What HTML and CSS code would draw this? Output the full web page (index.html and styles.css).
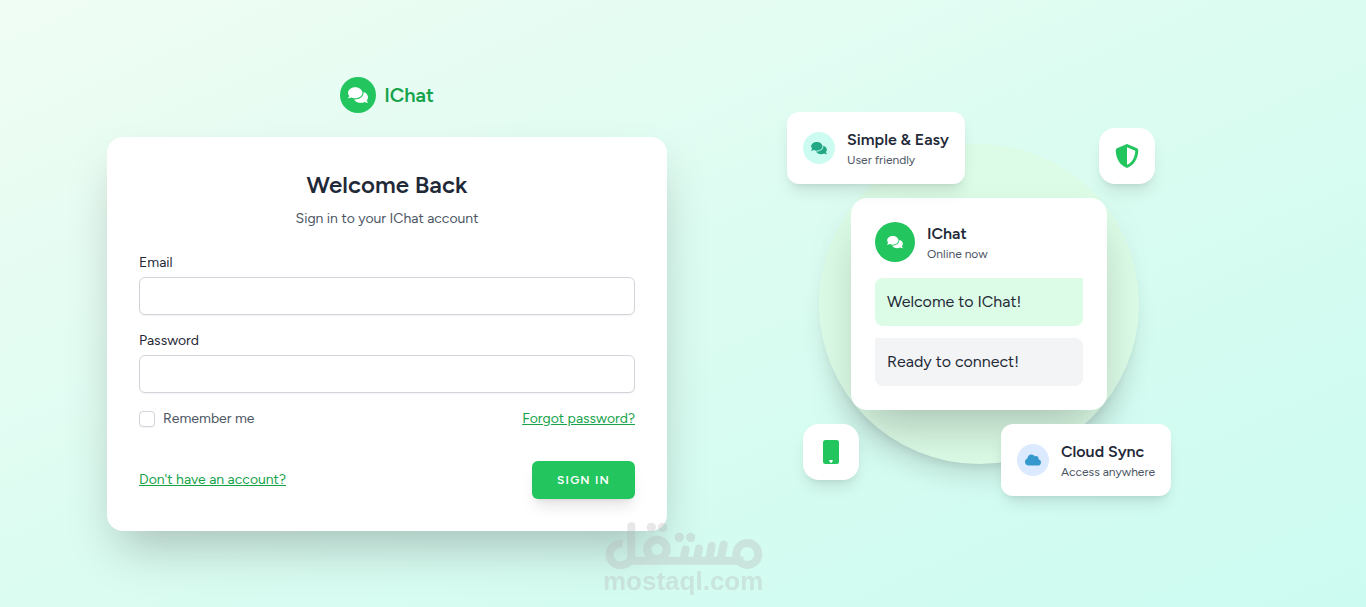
FILE: index.html
```html
<!DOCTYPE html>
<html lang="en">

<head>
    <meta charset="UTF-8">
    <meta name="viewport" content="width=device-width, initial-scale=1.0">
    <title>IChat - Sign in</title>
    <link rel="stylesheet" href="styles.css">
</head>

<body>
    <!-- Shared icons -->
    <svg class="sprite" aria-hidden="true">
        <symbol id="comments" viewBox="0 0 576 512">
            <path d="M416 192c0-88.4-93.1-160-208-160S0 103.6 0 192c0 34.3 14.1 65.9 38 92-13.4 30.2-35.5 54.2-35.8 54.5-2.2 2.3-2.8 5.7-1.5 8.7S4.8 352 8 352c36.6 0 66.9-12.3 88.7-25 32.2 15.7 70.3 25 111.3 25 114.9 0 208-71.6 208-160zm122 220c23.9-26 38-57.7 38-92 0-66.9-53.5-124.2-129.3-148.1.9 6.6 1.3 13.3 1.3 20.1 0 105.9-107.7 192-240 192-10.8 0-21.3-.8-31.7-1.9C207.8 439.6 281.8 480 368 480c41 0 79.1-9.2 111.3-25 21.8 12.7 52.1 25 88.7 25 3.2 0 6.1-1.9 7.3-4.8 1.3-2.9.7-6.3-1.5-8.7-.3-.3-22.4-24.2-35.8-54.5z" />
        </symbol>
    </svg>

    <div class="page">
        <div class="container">
            <main class="login">
                <a class="brand" href="#">
                    <span class="brand-icon"><svg><use href="#comments" /></svg></span>
                    <span>IChat</span>
                </a>

                <div class="card">
                    <h1>Welcome Back</h1>
                    <p class="subtitle">Sign in to your IChat account</p>

                    <form>
                        <div class="field">
                            <label for="email">Email</label>
                            <input type="email" id="email" name="email">
                        </div>
                        <div class="field">
                            <label for="password">Password</label>
                            <input type="password" id="password" name="password">
                        </div>
                        <div class="options">
                            <label class="remember" for="remember">
                                <input type="checkbox" id="remember" name="remember">
                                <span>Remember me</span>
                            </label>
                            <a class="link" href="#">Forgot password?</a>
                        </div>
                        <div class="actions">
                            <a class="link" href="#">Don't have an account?</a>
                            <button type="submit">Sign in</button>
                        </div>
                    </form>
                </div>
            </main>

            <section class="preview">
                <div class="circle">
                    <div class="chat">
                        <div class="chat-head">
                            <span class="avatar"><svg><use href="#comments" /></svg></span>
                            <div>
                                <h2>IChat</h2>
                                <p class="small">Online now</p>
                            </div>
                        </div>
                        <div class="bubble bubble-green">Welcome to IChat!</div>
                        <div class="bubble bubble-gray">Ready to connect!</div>
                    </div>

                    <div class="feature feature-simple">
                        <span class="dot dot-teal"><svg><use href="#comments" /></svg></span>
                        <div>
                            <h2>Simple &amp; Easy</h2>
                            <p class="small">User friendly</p>
                        </div>
                    </div>

                    <div class="feature feature-cloud">
                        <span class="dot dot-blue">
                            <svg viewBox="0 0 640 512">
                                <path d="M537.6 226.6c4.1-10.7 6.4-22.4 6.4-34.6 0-53-43-96-96-96-19.7 0-38.1 6-53.3 16.2C367 64.2 315.3 32 256 32c-88.4 0-160 71.6-160 160 0 2.7.1 5.4.2 8.1C40.2 219.8 0 273.2 0 336c0 79.5 64.5 144 144 144h368c70.7 0 128-57.3 128-128 0-61.9-44-113.6-102.4-125.4z" />
                            </svg>
                        </span>
                        <div>
                            <h2>Cloud Sync</h2>
                            <p class="small">Access anywhere</p>
                        </div>
                    </div>

                    <div class="tile tile-shield">
                        <svg viewBox="0 0 512 512">
                            <path d="M256 0c4.6 0 9.2 1 13.4 2.9L457.7 82.8c22 9.3 38.4 31 38.3 57.2-.5 99.2-41.3 280.7-213.6 363.2-16.7 8-36.1 8-52.8 0C57.3 420.7 16.5 239.2 16 140c-.1-26.2 16.3-47.9 38.300-57.2L242.7 2.9C246.8 1 251.4 0 256 0zm0 66.8v378.1C394 378 431.1 230.1 432 141.4L256 66.8z" />
                        </svg>
                    </div>
                    <div class="tile tile-phone">
                        <svg viewBox="0 0 24 24">
                            <path fill-rule="evenodd" d="M6.500 0h11a2.500 2.500 0 0 1 2.500 2.500v19a2.500 2.500 0 0 1-2.500 2.500h-11a2.500 2.500 0 0 1-2.500-2.500v-19a2.500 2.500 0 0 1 2.500-2.500zM10.300 20v1l1 1.800h1.400l1-1.800v-1z" />
                        </svg>
                    </div>
                </div>
            </section>
        </div>
    </div>

    <div class="watermark">
        <svg viewBox="38 34 480 142" role="img" aria-label="مستقل">
            <g fill="none" stroke="currentColor" stroke-width="24" stroke-linecap="round">
                <path d="M97 99a33 33 0 1 0-12 65q25 0 34-14H460" stroke-linecap="butt" />
                <path d="M123 47V146" />
                <circle cx="200" cy="116" r="29" />
                <path d="M286 116l-7 32M326 114l-7 34M364 106l-8 42M400 102l-10 46" />
                <circle cx="471" cy="130" r="33" />
            </g>
            <g fill="currentColor">
                <circle cx="183" cy="50" r="14" />
                <circle cx="217" cy="50" r="14" />
                <circle cx="267" cy="80" r="14" />
                <circle cx="301" cy="80" r="14" />
            </g>
        </svg>
        <span>mostaql.com</span>
    </div>
</body>

</html>
```
FILE: styles.css
```css
/* General styling */
* {
    box-sizing: border-box;
    margin: 0;
    padding: 0;
}

body {
    font-family: Figtree, Roboto, sans-serif;
    font-size: 16px;
    line-height: 24px;
    color: #1f2937;
}

h1 {
    font-size: 24px;
    line-height: 32px;
    font-weight: 600;
    text-align: center;
}

h2 {
    font-size: 16px;
    line-height: 24px;
    font-weight: 600;
}

svg {
    display: block;
    fill: currentColor;
}

.sprite {
    position: absolute;
    width: 0;
    height: 0;
}

.small {
    font-size: 12px;
    line-height: 16px;
    color: #4b5563;
}

.page {
    position: relative;
    display: flex;
    align-items: center;
    justify-content: center;
    min-height: 100vh;
    padding: 32px;
    background: linear-gradient(to bottom right, #f0fdf4, #dbfcf1 50%, #ccfbf1);
}

.container {
    display: grid;
    grid-template-columns: 1fr 1fr;
    align-items: center;
    gap: 32px;
    width: 100%;
    max-width: 1152px;
}

/* Login side */
.brand {
    display: flex;
    align-items: center;
    justify-content: center;
    gap: 8px;
    margin-bottom: 24px;
    font-size: 20px;
    font-weight: 600;
    color: #16a34a;
    text-decoration: none;
}

.brand-icon,
.avatar,
.dot {
    display: flex;
    align-items: center;
    justify-content: center;
    border-radius: 50%;
}

.brand-icon {
    width: 36px;
    height: 36px;
    color: #fff;
    background: #22c55e;
}

.brand-icon svg {
    width: 20px;
    height: 18px;
}

.card {
    padding: 32px;
    background: #fff;
    border-radius: 16px;
    box-shadow: 0 25px 50px -12px rgba(0, 0, 0, 0.25);
}

.subtitle {
    margin: 8px 0 24px;
    font-size: 14px;
    line-height: 20px;
    text-align: center;
    color: #4b5563;
}

form {
    font-size: 14px;
    line-height: 20px;
}

.field {
    margin-bottom: 16px;
}

.field label {
    display: block;
    margin-bottom: 4px;
}

.field input {
    display: block;
    width: 100%;
    height: 38px;
    padding: 8px 12px;
    font: inherit;
    border: 1px solid #d1d5db;
    border-radius: 6px;
    box-shadow: 0 1px 2px rgba(0, 0, 0, 0.05);
}

.options,
.actions {
    display: flex;
    align-items: center;
    justify-content: space-between;
}

.remember {
    display: flex;
    align-items: center;
    gap: 8px;
    color: #4b5563;
}

.remember input {
    appearance: none;
    width: 16px;
    height: 16px;
    background: #fff;
    border: 1px solid #d1d5db;
    border-radius: 4px;
    box-shadow: 0 1px 2px rgba(0, 0, 0, 0.05);
}

.remember input:checked {
    background: #22c55e;
}

.link {
    color: #16a34a;
    text-decoration: underline;
}

.actions {
    margin-top: 32px;
}

button {
    height: 38px;
    padding: 0 25px;
    font-family: inherit;
    font-size: 12px;
    font-weight: 600;
    letter-spacing: 0.1em;
    text-transform: uppercase;
    color: #fff;
    background: #22c55e;
    border: none;
    border-radius: 6px;
    box-shadow: 0 10px 15px -3px rgba(0, 0, 0, 0.1), 0 4px 6px -4px rgba(0, 0, 0, 0.1);
    cursor: pointer;
}

/* Preview side */
.preview {
    display: flex;
    justify-content: center;
}

.circle {
    position: relative;
    display: flex;
    align-items: center;
    justify-content: center;
    width: 320px;
    height: 320px;
    background: #dcfce7;
    border-radius: 50%;
    box-shadow: 0 20px 25px -5px rgba(0, 0, 0, 0.1), 0 8px 10px -6px rgba(0, 0, 0, 0.1);
}

.chat {
    display: grid;
    gap: 12px;
    width: 256px;
    padding: 24px;
    background: #fff;
    border-radius: 16px;
    box-shadow: 0 25px 50px -12px rgba(0, 0, 0, 0.25);
}

.chat-head {
    display: flex;
    align-items: center;
    gap: 12px;
    margin-bottom: 4px;
}

.avatar {
    width: 40px;
    height: 40px;
    color: #fff;
    background: #22c55e;
}

.avatar svg,
.dot svg {
    width: 16px;
    height: 14px;
}

.bubble {
    padding: 12px;
    border-radius: 8px;
}

.bubble-green {
    background: #dcfce7;
    border-top-right-radius: 0;
}

.bubble-gray {
    background: #f3f4f6;
    border-top-left-radius: 0;
}

/* Floating badges around the circle */
.feature,
.tile {
    position: absolute;
    display: flex;
    align-items: center;
    background: #fff;
    box-shadow: 0 10px 15px -3px rgba(0, 0, 0, 0.1), 0 4px 6px -4px rgba(0, 0, 0, 0.1);
}

.feature {
    gap: 12px;
    padding: 16px;
    border-radius: 12px;
    white-space: nowrap;
}

.feature-simple {
    top: -32px;
    left: -32px;
}

.feature-cloud {
    right: -32px;
    bottom: -32px;
}

.dot {
    width: 32px;
    height: 32px;
}

.dot-teal {
    color: #22a884;
    background: #ccfbf1;
}

.dot-blue {
    color: #3498cc;
    background: #dbeafe;
}

.tile {
    padding: 16px;
    border-radius: 16px;
    color: #22c55e;
}

.tile svg {
    width: 24px;
    height: 24px;
}

.tile-shield {
    top: -16px;
    right: -16px;
}

.tile-phone {
    bottom: -16px;
    left: -16px;
}

/* Watermark */
.watermark {
    position: fixed;
    bottom: 10px;
    left: 50%;
    width: 160px;
    margin-left: -80px;
    color: #b4b4b4;
    opacity: 0.32;
    text-align: center;
    pointer-events: none;
}

.watermark span {
    font-family: "Liberation Sans", sans-serif;
    font-size: 26px;
    font-weight: 700;
}

@media (max-width: 900px) {
    .container {
        grid-template-columns: 1fr;
    }

    .preview {
        display: none;
    }
}
```
